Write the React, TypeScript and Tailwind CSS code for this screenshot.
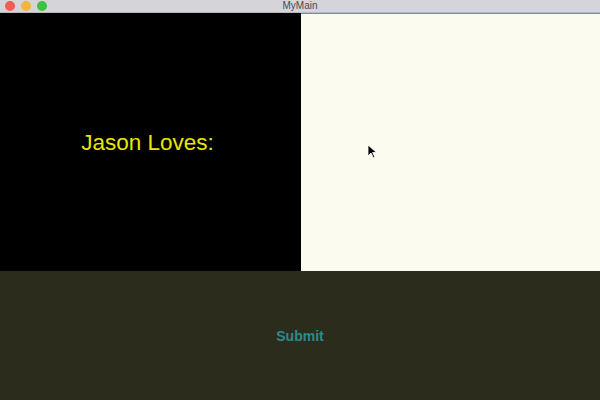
import React from 'react';

const App = () => {
  return (
    <div className="w-[600px] h-[400px] flex flex-col bg-[#2c2c1d] font-['Liberation_Sans',Arial,sans-serif] overflow-hidden">
      {/* title bar */}
      <div className="h-[13px] relative flex items-center justify-center bg-[#d5d5d9] border-b border-[#b8b8c0]">
        <div className="absolute left-[5px] top-[1px] flex gap-[6px]">
          <span className="w-[10px] h-[10px] rounded-full bg-[#f25c54]" />
          <span className="w-[10px] h-[10px] rounded-full bg-[#f5b53a]" />
          <span className="w-[10px] h-[10px] rounded-full bg-[#3cc23f]" />
        </div>
        <span className="text-[10px] leading-none text-[#4a4a4a]">MyMain</span>
      </div>

      <div className="h-[258px] flex">
        <div className="w-[301px] bg-black flex items-center justify-center">
          <span className="text-[22.5px] text-[#e8e600] mt-[2px] -ml-[6px]">Jason Loves:</span>
        </div>
        <div className="flex-1 bg-[#fbfbf0] border-t border-[#7a8aa8] relative">
          <svg className="absolute left-[66px] top-[130px]" width="12" height="16" viewBox="0 0 12 16">
            <path d="M1 1 L1 12 L4 9 L6.5 14 L8 13.3 L5.6 8.5 L9.5 8.5 Z" fill="#000" stroke="#fff" strokeWidth="0.8" />
          </svg>
        </div>
      </div>

      <div className="flex-1 flex items-center justify-center">
        <span className="text-[14px] font-bold text-[#2d8a8c] mt-[2px]">Submit</span>
      </div>
    </div>
  );
};

export default App;
